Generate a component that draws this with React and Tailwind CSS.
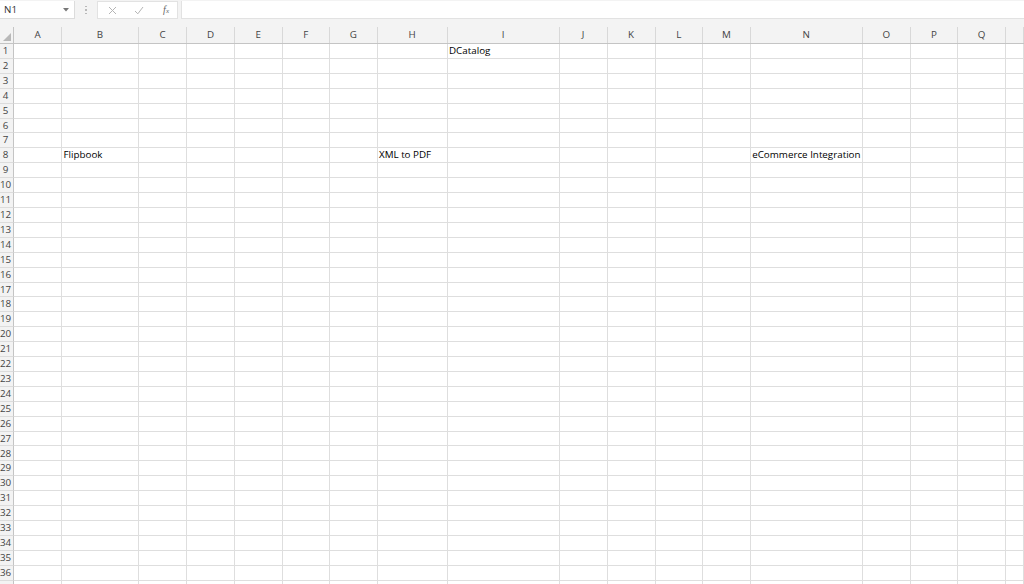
import React from "react";

const COLS = ["A","B","C","D","E","F","G","H","I","J","K","L","M","N","O","P","Q",""];
const data = {
  1: { 8: "DCatalog" },
  8: { 1: "Flipbook", 7: "XML to PDF", 13: "eCommerce Integration" },
};
const GRID = "grid grid-cols-[14px_48px_77px_48px_48px_47.5px_47.5px_47.5px_70px_112px_48px_48px_47.5px_47.7px_112px_48px_47.6px_47.4px_1fr]";

export default function App() {
  const rows = Array.from({ length: 37 }, (_, i) => i + 1);
  return (
    <div className="w-[1024px] h-[584px] overflow-hidden bg-[#f3f3f3] text-[#222]" style={{ fontFamily: '"Open Sans", "Noto Sans", sans-serif' }}>
      {/* toolbar */}
      <div className="h-[20px] flex items-start pt-[1px]">
        <div className="w-[75px] h-[18px] bg-white border-r border-b border-[#dcdcdc] flex items-center justify-between pl-[4px] pr-[5px]">
          <span className="text-[9.8px] text-[#333] leading-none">N1</span>
          <svg width="6" height="4" viewBox="0 0 6 4"><path d="M0 0 L6 0 L3 3.5 Z" fill="#777" /></svg>
        </div>
        <div className="w-[22px] h-[18px] flex flex-col items-center justify-center gap-[2px]">
          <span className="w-[1.5px] h-[1.5px] bg-[#b8b8b8]" />
          <span className="w-[1.5px] h-[1.5px] bg-[#b8b8b8]" />
          <span className="w-[1.5px] h-[1.5px] bg-[#b8b8b8]" />
        </div>
        <div className="w-[81px] h-[18px] bg-white border border-[#e2e2e2] flex items-center">
          <div className="w-[19px] flex justify-end">
            <svg width="9" height="9" viewBox="0 0 9 9"><path d="M1 1 L8 8 M8 1 L1 8" stroke="#b5b5b5" strokeWidth="1" /></svg>
          </div>
          <div className="w-[27px] flex justify-end">
            <svg width="10" height="9" viewBox="0 0 10 9"><path d="M1 5 L3.8 7.8 L9 1" stroke="#b5b5b5" strokeWidth="1" fill="none" /></svg>
          </div>
          <div className="w-[25px] flex justify-end">
            <span className="text-[10px] italic text-[#666] leading-none" style={{ fontFamily: '"Liberation Serif", serif' }}>f<span className="text-[7px]">x</span></span>
          </div>
        </div>
        <div className="ml-[3px] flex-1 h-[18px] bg-white border-l border-b border-[#e2e2e2]" />
      </div>
      <div className="h-[7px]" />
      {/* header */}
      <div className={`${GRID} h-[17px] bg-[#f3f3f3] border-b border-[#c4c4c4]`}>
        <div className="relative border-r border-[#c4c4c4]">
          <svg className="absolute right-[2px] bottom-[2px]" width="8" height="8" viewBox="0 0 8 8"><path d="M8 0 L8 8 L0 8 Z" fill="#b8b8b8" /></svg>
        </div>
        {COLS.map((c, i) => (
          <div key={i} className="border-r border-[#d8d8d8] flex items-center justify-center text-[9.8px] text-[#444] leading-none">{c}</div>
        ))}
      </div>
      {/* rows */}
      <div className="bg-white">
        {rows.map((r) => (
          <div key={r} className={`${GRID} h-[14.91px]`}>
            <div className="bg-[#f3f3f3] border-r border-b border-r-[#c4c4c4] border-b-[#dcdcdc] flex items-center justify-center pr-[2px] text-[9.8px] text-[#444] leading-none">{r < 37 ? r : null}</div>
            {COLS.map((c, i) => (
              <div key={i} className="border-r border-b border-[#dedede] flex items-center pl-[1.5px] text-[9.8px] text-black leading-none whitespace-nowrap overflow-visible relative z-10">
                {data[r] && data[r][i] ? data[r][i] : null}
              </div>
            ))}
          </div>
        ))}
      </div>
    </div>
  );
}
